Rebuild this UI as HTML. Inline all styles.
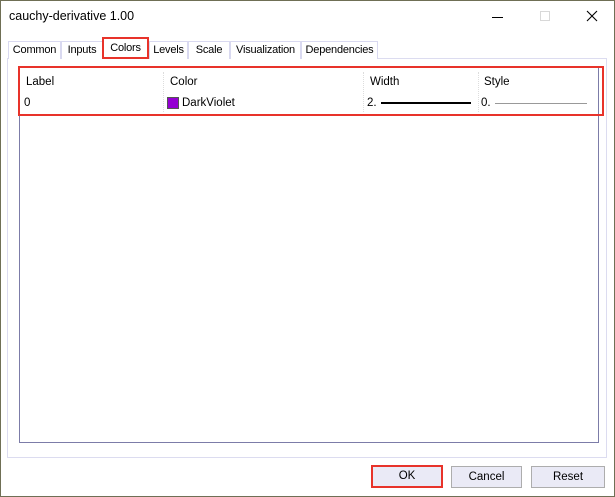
<!DOCTYPE html>
<html><head><style>
*{box-sizing:border-box}
body{margin:0;width:615px;height:497px;background:#fff;font-family:"Liberation Sans",sans-serif;font-size:11.5px;color:#000;position:relative;overflow:hidden}
.a{position:absolute}
.tab{position:absolute;top:41px;height:18px;border:1px solid #d9d9f0;border-bottom:none;line-height:17px;text-align:center;font-size:11px;background:#fff;letter-spacing:-0.2px}
.btn{position:absolute;top:466px;height:22px;border:1px solid #adadad;background:#eaeaf6;text-align:center;line-height:20px;font-size:11.5px}
</style></head><body>
<div class="a" style="left:0;top:0;width:615px;height:497px;border:1px solid #6f6f55"></div>
<div class="a" style="left:9px;top:9px;font-size:12.5px">cauchy-derivative 1.00</div>
<div class="a" style="left:492px;top:17px;width:11px;height:1px;background:#000"></div>
<div class="a" style="left:540px;top:11px;width:10px;height:10px;border:1px solid #d8d8d8"></div>
<svg class="a" style="left:586px;top:10px" width="12" height="12"><path d="M1 1L11 11M11 1L1 11" stroke="#000" stroke-width="1.1"/></svg>
<div class="a" style="left:7px;top:58px;width:600px;height:400px;border:1px solid #dcdcf0"></div>
<div class="tab" style="left:8px;width:53px">Common</div>
<div class="tab" style="left:61px;width:42px">Inputs</div>
<div class="tab" style="left:102px;width:47px;top:37px;height:22px;border:2px solid #e8332a;line-height:18px;">Colors</div>
<div class="tab" style="left:149px;width:39px">Levels</div>
<div class="tab" style="left:188px;width:42px">Scale</div>
<div class="tab" style="left:230px;width:71px">Visualization</div>
<div class="tab" style="left:301px;width:77px">Dependencies</div>
<div class="a" style="left:19px;top:66px;width:580px;height:377px;border:1px solid #7c7ca8"></div>
<div class="a" style="left:18px;top:66px;width:586px;height:50px;border:2px solid #e8332a"></div>
<div class="a" style="left:163px;top:72px;height:40px;border-left:1px dotted #ddd"></div>
<div class="a" style="left:363px;top:72px;height:40px;border-left:1px dotted #ddd"></div>
<div class="a" style="left:478px;top:72px;height:40px;border-left:1px dotted #ddd"></div>
<div class="a" style="left:26px;top:76px">Label</div>
<div class="a" style="left:170px;top:76px">Color</div>
<div class="a" style="left:370px;top:76px">Width</div>
<div class="a" style="left:484px;top:76px">Style</div>
<div class="a" style="left:24px;top:97px">0</div>
<div class="a" style="left:167px;top:97px;width:12px;height:12px;background:#9400d3;border:1px solid #555"></div>
<div class="a" style="left:182px;top:97px">DarkViolet</div>
<div class="a" style="left:367px;top:97px">2.</div>
<div class="a" style="left:381px;top:102px;width:90px;height:2px;background:#000"></div>
<div class="a" style="left:481px;top:97px">0.</div>
<div class="a" style="left:495px;top:103px;width:92px;height:1px;background:#999"></div>
<div class="btn" style="left:371px;top:465px;width:72px;height:23px;border:2px solid #e8332a;line-height:19px">OK</div>
<div class="btn" style="left:451px;width:71px">Cancel</div>
<div class="btn" style="left:531px;width:74px">Reset</div>
</body></html>
